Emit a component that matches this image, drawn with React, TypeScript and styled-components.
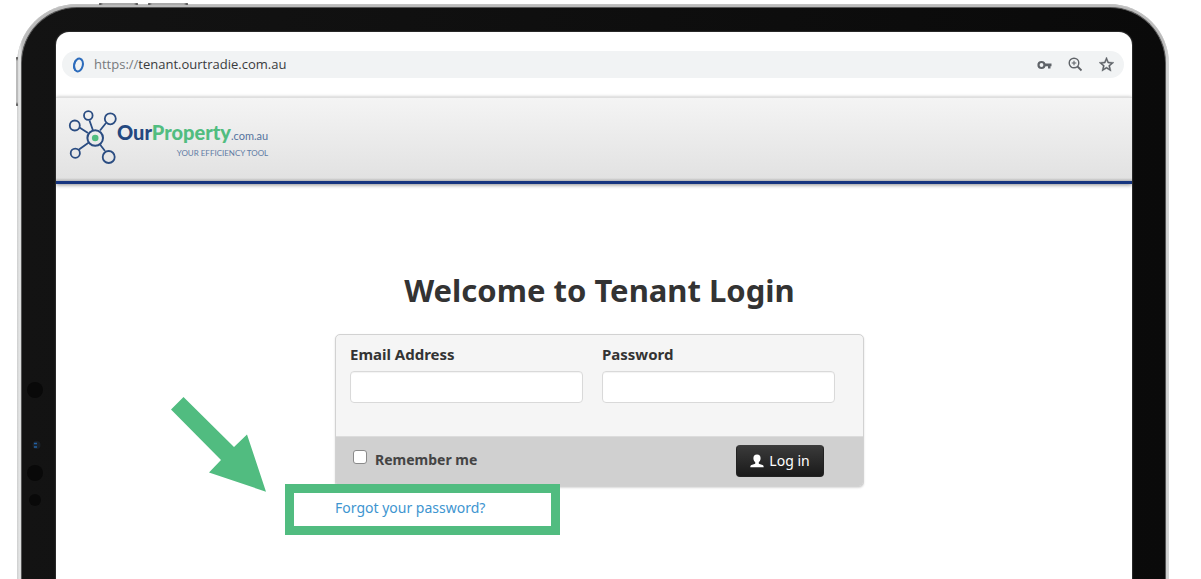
import React from "react";
import styled, { createGlobalStyle } from "styled-components";

const GlobalStyle = createGlobalStyle`
  *, *::before, *::after { box-sizing: border-box; }
  body {
    margin: 0;
    background: #fff;
    color: #333;
    font-family: "Noto Sans", "Open Sans", sans-serif;
    overflow-x: hidden;
  }
`;

const Page = styled.div`
  display: flex;
  min-height: 100vh;
  padding: 4px 32px 0 17px;
`;

const Device = styled.div`
  position: relative;
  flex: 1;
  display: flex;
  padding: 3px 3px 0 4px;
  border-radius: 60px 60px 0 0;
  background: linear-gradient(90deg, #d0d1d1, #e6e7e7 3px, #bbb 5px, #bbb calc(100% - 5px), #c9caca calc(100% - 3px), #d9dada);
  box-shadow: inset 0 1px 1px #c4c4c4;
`;

const Bezel = styled.div`
  flex: 1;
  display: flex;
  padding: 24px 33px 0 34px;
  border: solid #555;
  border-width: 1px 1px 0 1px;
  border-radius: 56px 56px 0 0;
  background: linear-gradient(90deg, #131313, #0a0a0a);
`;

const Screen = styled.div`
  flex: 1;
  display: flex;
  flex-direction: column;
  border-radius: 13px 13px 0 0;
  background: #fff;
  box-shadow: 0 0 1px 1px #2c2c2c;
  overflow: hidden;
`;

const HardwareButton = styled.span<{ $x: number; $y: number; $w: number; $h: number }>`
  position: absolute;
  left: ${(p) => p.$x}px;
  top: ${(p) => p.$y}px;
  width: ${(p) => p.$w}px;
  height: ${(p) => p.$h}px;
  border-radius: 1px;
  background: ${(p) =>
    p.$w > p.$h
      ? "linear-gradient(90deg, #333, #aaa 4px, #aaa calc(100% - 4px), #333)"
      : "linear-gradient(#333, #bbb 4px, #bbb calc(100% - 4px), #333)"};
`;

const Sensor = styled.span<{ $y: number; $r: number }>`
  position: absolute;
  left: ${(p) => 18 - p.$r}px;
  top: ${(p) => p.$y - p.$r}px;
  width: ${(p) => p.$r * 2}px;
  height: ${(p) => p.$r * 2}px;
  border-radius: 50%;
  background: #090909;
`;

const Lens = styled.svg`
  position: absolute;
  left: 14px;
  top: 436px;
`;

const AddressRow = styled.div`
  padding: 19px 8px 19px 6px;
`;

const AddressBar = styled.div`
  display: flex;
  align-items: center;
  height: 27px;
  padding: 0 10px;
  border-radius: 14px;
  background: #f1f3f4;
`;

const Url = styled.span`
  flex: 1;
  margin-left: 9px;
  padding-bottom: 2px;
  font: 13px/20px "Open Sans", "Noto Sans", sans-serif;
  color: #3a3b3d;
`;

const Scheme = styled.span`
  color: #777a7d;
`;

const BarIcons = styled.div`
  display: flex;
  align-items: center;
  gap: 16px;
`;

const Header = styled.header`
  display: flex;
  align-items: flex-start;
  height: 87px;
  padding: 12px 12px 0;
  border-top: 1px solid #dfdfdf;
  border-bottom: 3px solid #16357f;
  background: linear-gradient(#f4f4f4, #e2e2e2 80px, #b5b5b5);
  box-shadow: 0 1px 4px rgba(0, 0, 0, 0.45);
`;

const Brand = styled.div`
  display: flex;
  flex-direction: column;
  align-items: flex-end;
  padding-top: 10px;
  font-family: Lato, sans-serif;
`;

const BrandName = styled.div`
  font-size: 20px;
  font-weight: 900;
  line-height: 24px;
  color: #24487f;
`;

const Green = styled.span`
  color: #51bd80;
`;

const Domain = styled.span`
  font-size: 11px;
  font-weight: 400;
  color: #55739e;
`;

const Tagline = styled.div`
  font-size: 8px;
  line-height: 10px;
  color: #5f7ba4;
`;

const Main = styled.main`
  display: flex;
  flex-direction: column;
  align-items: center;
  padding: 84px 0 0 11px;
`;

const Title = styled.h1`
  margin: 0 0 22px;
  font-size: 31px;
  font-weight: 700;
  line-height: 44px;
`;

const LoginArea = styled.div`
  width: 529px;
  max-width: 100%;
`;

const Panel = styled.form`
  border: 1px solid #d2d2d2;
  border-radius: 5px;
  background: #f5f5f5;
  box-shadow: 0 1px 2px rgba(0, 0, 0, 0.15);
  overflow: hidden;
`;

const Fields = styled.div`
  display: grid;
  grid-template-columns: 1fr 1fr;
  gap: 19px;
  padding: 9px 28px 33px 14px;
`;

const Field = styled.label`
  display: flex;
  flex-direction: column;
  gap: 7px;
  font-size: 15px;
  font-weight: 700;
  line-height: 20px;
`;

const TextInput = styled.input`
  width: 100%;
  height: 32px;
  padding: 4px 8px;
  border: 1px solid #d9d9d9;
  border-radius: 4px;
  background: #fff;
  font: 14px/20px "Noto Sans", sans-serif;
  box-shadow: inset 0 1px 1px rgba(0, 0, 0, 0.05);
`;

const Actions = styled.div`
  display: flex;
  justify-content: space-between;
  align-items: flex-start;
  padding: 8px 39px 9px 17px;
  border-top: 1px solid #dcdcdc;
  background: #d0d0d0;
`;

const Remember = styled.label`
  display: flex;
  align-items: flex-start;
  gap: 8px;
  padding-top: 5px;
  font-size: 14px;
  font-weight: 700;
  line-height: 20px;
  color: #444;
`;

const Tick = styled.input`
  appearance: none;
  width: 14px;
  height: 14px;
  margin: 0;
  border: 1px solid #8a8a8a;
  border-radius: 3px;
  background: #fff;
  &:checked { background: #24487f; }
`;

const LoginButton = styled.button`
  display: flex;
  align-items: center;
  justify-content: center;
  gap: 5px;
  width: 88px;
  height: 32px;
  padding: 0;
  border: 1px solid #222;
  border-top-color: #3c3c3c;
  border-radius: 4px;
  background: linear-gradient(#3a3a3a, #1a1a1a);
  color: #fff;
  font: 14px/20px "Noto Sans", sans-serif;
  cursor: pointer;
`;

const Callout = styled.div`
  position: relative;
  width: 275px;
  margin: -3px 0 0 -50px;
  padding: 5px 41px 8px;
  border: 9px solid #51bc80;
  background: #fff;
  font-size: 14px;
  line-height: 20px;
`;

const Arrow = styled.svg`
  position: absolute;
  left: -123px;
  top: -96px;
`;

const ForgotLink = styled.a`
  color: #3e95d0;
  text-decoration: none;
  white-space: nowrap;
`;

const NetworkLogo = () => (
  <svg width="49" height="56" viewBox="68 110 49 56" fill="none" stroke="#2b4d82" strokeWidth="1.8" aria-hidden="true">
    <path d="M79.5 127.500L88 133M89.500 120.500L93 130.500M106 123L100 130.500M79 149.500L89.500 142M105 151L100 144.500" />
    <circle cx="74.800" cy="125.500" r="5" />
    <circle cx="88.300" cy="115.500" r="4.300" />
    <circle cx="110.300" cy="118.800" r="5.500" />
    <circle cx="75.300" cy="153.200" r="4.600" />
    <circle cx="108.700" cy="157" r="6" />
    <circle cx="95.200" cy="138" r="7.800" strokeWidth="2" />
    <circle cx="95.200" cy="138" r="3.300" fill="#51bd80" stroke="none" />
  </svg>
);

const App: React.FC = () => (
  <>
    <GlobalStyle />
    <Page>
      <Device>
        <HardwareButton $x={82} $y={-1} $w={39} $h={2} />
        <HardwareButton $x={131} $y={-1} $w={40} $h={2} />
        <HardwareButton $x={-1} $y={53} $w={2} $h={49} />
        <Sensor $y={386} $r={8} />
        <Sensor $y={469} $r={8} />
        <Sensor $y={496} $r={6} />
        <Lens width="10" height="10" viewBox="0 0 10 10" aria-hidden="true">
          <circle cx="5.500" cy="5" r="4" fill="#1b2128" />
          <path d="M3 3.500h3M3 7h3" stroke="#2261a3" strokeWidth="1.500" />
        </Lens>
        <Bezel>
          <Screen>
            <AddressRow>
              <AddressBar>
                <svg width="13" height="16" viewBox="0 0 13 16" fill="none" aria-hidden="true">
                  <ellipse cx="6.500" cy="8" rx="4.300" ry="6.500" transform="rotate(14 6.500 8)" stroke="#2d6cbc" strokeWidth="2" />
                  <path d="M4 3C1.800 6 1.500 10.500 3.500 13.500" stroke="#2d6cbc" strokeWidth="2" />
                </svg>
                <Url>
                  <Scheme>https://</Scheme>tenant.ourtradie.com.au
                </Url>
                <BarIcons>
                  <svg width="15" height="10" viewBox="0 0 15 10" aria-hidden="true">
                    <circle cx="4.500" cy="5" r="3" fill="none" stroke="#5f6368" strokeWidth="2.200" />
                    <path d="M8 3.600h6.500v2.600h-1v2.300h-2.500V6.200H8z" fill="#5f6368" />
                  </svg>
                  <svg width="15" height="15" viewBox="0 0 15 15" fill="none" stroke="#5f6368" aria-hidden="true">
                    <circle cx="6" cy="6" r="4.800" strokeWidth="1.400" />
                    <path d="M9.500 9.500L13.500 13.500" strokeWidth="1.800" />
                    <path d="M3.700 6h4.600M6 3.700v4.600" strokeWidth="1.100" />
                  </svg>
                  <svg width="15" height="15" viewBox="2 2 20 20" fill="#5f6368" stroke="#5f6368" strokeWidth=".5" aria-hidden="true">
                    <path d="M22 9.240l-7.190-.62L12 2 9.190 8.630 2 9.240l5.460 4.730L5.820 21 12 17.270 18.180 21l-1.630-7.030L22 9.240zM12 15.400l-3.760 2.270 1-4.280-3.320-2.880 4.380-.38L12 6.100l1.710 4.040 4.380.38-3.320 2.880 1 4.280L12 15.400z" />
                  </svg>
                </BarIcons>
              </AddressBar>
            </AddressRow>
            <Header>
              <NetworkLogo />
              <Brand>
                <BrandName>
                  Our<Green>Property</Green><Domain>.com.au</Domain>
                </BrandName>
                <Tagline>YOUR EFFICIENCY TOOL</Tagline>
              </Brand>
            </Header>
            <Main>
              <Title>Welcome to Tenant Login</Title>
              <LoginArea>
                <Panel onSubmit={(e) => e.preventDefault()}>
                  <Fields>
                    <Field>
                      Email Address
                      <TextInput type="email" name="email" />
                    </Field>
                    <Field>
                      Password
                      <TextInput type="password" name="password" />
                    </Field>
                  </Fields>
                  <Actions>
                    <Remember>
                      <Tick type="checkbox" name="remember" />
                      Remember me
                    </Remember>
                    <LoginButton type="submit">
                      <svg width="14" height="14" viewBox="0 0 14 14" fill="#fff" aria-hidden="true">
                        <path d="M7 .5C4.600.5 3.300 2 3.400 4.200c0 1.700.7 3.100 1.800 3.900v1.600L1.500 11C.7 11.300.3 12 .3 13.300h13.400c0-1.300-.4-2-1.200-2.300L8.800 9.700V8.100c1.100-.8 1.800-2.200 1.800-3.900C10.700 2 9.400.5 7 .5z" />
                      </svg>
                      Log in
                    </LoginButton>
                  </Actions>
                </Panel>
                <Callout>
                  <ForgotLink href="#forgot">Forgot your password?</ForgotLink>
                  <Arrow width="96" height="96" viewBox="171 397 96 96" fill="#51bc80" aria-hidden="true">
                    <path d="M171 409.500L183.500 397L234 447L247 434.500L266 491.700L209 472.500L221 460z" />
                  </Arrow>
                </Callout>
              </LoginArea>
            </Main>
          </Screen>
        </Bezel>
      </Device>
    </Page>
  </>
);

export default App;
